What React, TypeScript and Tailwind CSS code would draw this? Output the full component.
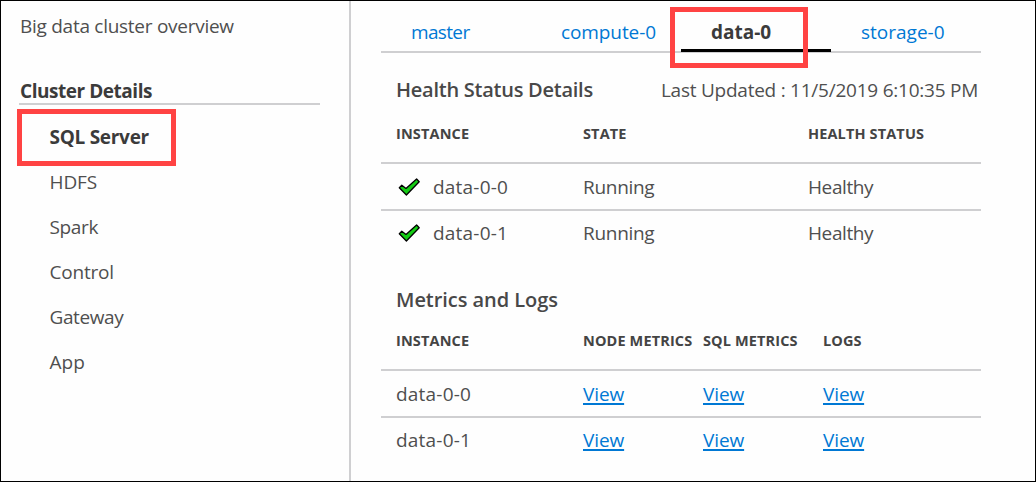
import React from "react";

const sidebarItems = [
  { label: "SQL Server", style: "font-bold tracking-[-0.28px] text-[#3b3b3b]" },
  { label: "HDFS", style: "tracking-[-0.1px]" },
  { label: "Spark", style: "tracking-[-0.35px]" },
  { label: "Control", style: "tracking-[-0.2px]" },
  { label: "Gateway", style: "tracking-[-0.4px]" },
  { label: "App", style: "" },
];

const tabs = [
  { label: "master", style: "tracking-[-0.65px]" },
  { label: "compute-0", style: "tracking-[-0.1px]" },
  { label: "data-0", style: "", active: true },
  { label: "storage-0", style: "" },
];

const instances = ["data-0-0", "data-0-1"];

function Check() {
  return (
    <svg viewBox="0 0 24 20" className="ml-[1px] mr-[12px] h-5 w-6" aria-hidden="true">
      <path
        d="M2.3 10.8 L4.8 8.2 L9 11.4 L19.6 2 L22.2 4.7 L9.4 18 Z"
        fill="#14cc14"
        stroke="#000"
        strokeWidth="1.3"
        strokeLinejoin="round"
      />
    </svg>
  );
}

function Heading({ children }: { children: React.ReactNode }) {
  return <div className="text-[14.5px] font-bold tracking-[0.13px] text-[#444444]">{children}</div>;
}

function ViewLink() {
  return (
    <a href="#" className="tracking-[-0.1px] text-[#0078d4] underline decoration-[1.5px] underline-offset-[2px]">
      View
    </a>
  );
}

export default function App() {
  return (
    <div className="flex h-[482px] w-[1036px] overflow-hidden border border-black bg-[#fefefe] font-['Open_Sans','Noto_Sans',sans-serif] text-[19px] leading-[26px] text-[#4f4f4f]">
      <aside className="flex w-[350px] shrink-0 flex-col border-r-2 border-[#cfcfd1] pl-[18px] pt-[12px]">
        <div className="whitespace-nowrap pl-px tracking-[-0.27px]">Big data cluster overview</div>
        <div className="mt-[39px] h-[27px] w-[301px] border-b-2 border-[#cfcfd1] pl-px font-bold tracking-[-0.46px] text-[#3b3b3b]">
          Cluster Details
        </div>
        <nav className="relative flex flex-col pt-[9px]">
          {sidebarItems.map((item) => (
            <div key={item.label} className="flex h-[45px] items-center pl-[30.5px]">
              <span className={item.style}>{item.label}</span>
            </div>
          ))}
          <div className="absolute left-[-2px] top-[4px] h-[57px] w-[159px] border-[5px] border-[#ff4343]" />
        </nav>
      </aside>

      <main className="w-[630px] pl-[30px]">
        <div className="relative flex h-[52px] w-[600px] border-b-2 border-[#cfcfd1]">
          {tabs.map((tab) => (
            <div
              key={tab.label}
              className={
                tab.active
                  ? "h-[51px] w-[150px] border-b-[3px] border-black pl-[30px] pt-[18px] font-bold text-[#3b3b3b]"
                  : "h-[51px] w-[150px] pl-[30px] pt-[18px] text-[#0078d4]"
              }
            >
              <span className={tab.style}>{tab.label}</span>
            </div>
          ))}
          <div className="absolute left-[289px] top-[6px] h-[61px] w-[138px] border-[5px] border-[#ff4343]" />
        </div>

        <section className="w-[600px]">
          <div className="flex h-[74px] items-center justify-between pl-[15px] pr-[3px]">
            <h2 className="text-[20px] font-semibold tracking-[-0.25px] text-[#484848]">Health Status Details</h2>
            <div className="tracking-[-0.24px]">Last Updated : 11/5/2019 6:10:35 PM</div>
          </div>
          <div className="-mt-[6px] grid h-[43px] grid-cols-[187px_225px_1fr] border-b-2 border-[#cfcfd1] pl-[15px]">
            <Heading>INSTANCE</Heading>
            <Heading>STATE</Heading>
            <Heading>HEALTH STATUS</Heading>
          </div>
          {instances.map((name, i) => (
            <div
              key={name}
              className={
                i === 0
                  ? "grid h-[47px] grid-cols-[187px_225px_1fr] items-center border-b-2 border-[#cfcfd1] pl-[15px]"
                  : "grid h-[44px] grid-cols-[187px_225px_1fr] items-center pl-[15px]"
              }
            >
              <div className="flex items-center">
                <Check />
                <span className="tracking-[0.2px]">{name}</span>
              </div>
              <span className="tracking-[-0.3px]">Running</span>
              <span className="tracking-[-0.4px]">Healthy</span>
            </div>
          ))}
        </section>

        <section className="w-[600px]">
          <h2 className="mt-[32px] pl-[15px] text-[20px] font-semibold tracking-[-0.05px] text-[#484848]">Metrics and Logs</h2>
          <div className="mt-[15px] grid h-[43px] grid-cols-[187px_120px_120px_1fr] border-b-2 border-[#cfcfd1] pl-[15px]">
            <Heading>INSTANCE</Heading>
            <Heading>NODE METRICS</Heading>
            <Heading>SQL METRICS</Heading>
            <Heading>LOGS</Heading>
          </div>
          {instances.map((name, i) => (
            <div
              key={name}
              className={
                i === 0
                  ? "grid h-[47px] grid-cols-[187px_120px_120px_1fr] items-center border-b-2 border-[#cfcfd1] pl-[15px]"
                  : "grid h-[44px] grid-cols-[187px_120px_120px_1fr] items-center pl-[15px]"
              }
            >
              <span className="tracking-[0.2px]">{name}</span>
              <ViewLink />
              <ViewLink />
              <ViewLink />
            </div>
          ))}
        </section>
      </main>
    </div>
  );
}
